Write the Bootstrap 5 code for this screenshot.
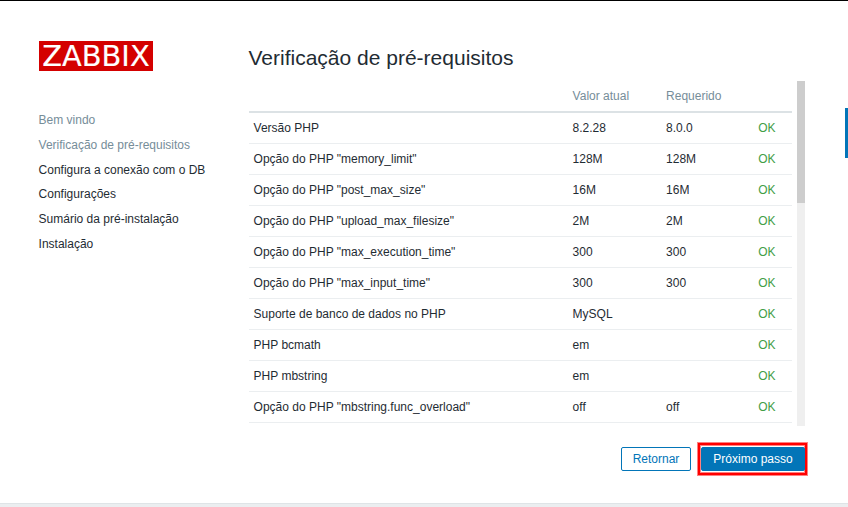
<!DOCTYPE html>
<html lang="pt-BR">
<head>
<meta charset="utf-8">
<meta name="viewport" content="width=device-width, initial-scale=1">
<title>Instalação</title>
<link href="https://cdn.jsdelivr.net/npm/bootstrap@5.3.0/dist/css/bootstrap.min.css" rel="stylesheet">
<style>
body{font:12px/18px "Liberation Sans",Arial,sans-serif;color:#1f2c33;background:#ebeef0;height:507px}
.setup{height:504px;border-top:1px solid #000;border-bottom:1px solid #dfe4e7}
.setup-left{width:249px;padding:40px 0 0 38.6px}
.logo{width:114px;height:30px;margin-left:.4px}
.steps{margin-top:37px}
.steps li{height:24.8px;line-height:24px;white-space:nowrap}
.muted{color:#768d99}
.setup-right{width:559px;padding-top:40px}
h1{font-size:21px;line-height:34px;height:40px;margin:0 0 0 -.5px}
.checks{height:345px;width:556px}
.reqs{width:543px;table-layout:fixed;margin:0;border-collapse:separate;border-spacing:0}
.reqs th{height:32px;padding:0 5px 0 4.6px;font-weight:400;color:#768d99;border-bottom:2px solid #dce2e5;vertical-align:middle}
.reqs td{height:31px;padding:0 5px 0 4.6px;border-bottom:1px solid #ebeef0;vertical-align:middle;line-height:18px}
.reqs .ok{color:#429e47;padding-right:16.4px;text-align:right}
.track{width:8px;background:#efefef}
.thumb{height:122px;background:#cdcdcd}
.actions{margin-top:16px;height:34px}
.actions .btn{height:24px;font-size:12px;line-height:22px;padding:0;border-radius:2px;border-color:#0275b8}
.btn-back{width:70px;color:#0275b8;background:#fff;margin:5px 6px 0 0}
.btn-next{width:104px;color:#fff;background:#0275b8}
.marked{width:111px;height:34px;padding:4px 2px 0 3px;border:1px solid #ff8080;box-shadow:inset 0 0 0 2px #f00,inset 0 0 0 3px #ff8080}
.side-strip{width:3px;height:503px;padding-top:107px;border-bottom:1px solid #dfe4e7}
.side-tab{height:50px;background:#0275b8}
</style>
<script src="https://cdn.jsdelivr.net/npm/bootstrap@5.3.0/dist/js/bootstrap.bundle.min.js"></script>
</head>
<body class="overflow-hidden">
<main class="setup d-flex bg-white">
  <aside class="setup-left flex-shrink-0">
    <svg class="logo d-block overflow-visible" viewBox="0 0 114 30" role="img" aria-label="ZABBIX">
      <rect width="114" height="30" fill="#d40000"/>
      <text x="3.2" y="25.4" font-family="DejaVu Sans, sans-serif" font-size="28" fill="#fff" stroke="#fff" stroke-width=".15" textLength="107.5" lengthAdjust="spacingAndGlyphs">ZABBIX</text>
    </svg>
    <ul class="steps list-unstyled mb-0">
      <li class="muted">Bem vindo</li>
      <li class="muted">Verificação de pré-requisitos</li>
      <li>Configura a conexão com o DB</li>
      <li>Configurações</li>
      <li>Sumário da pré-instalação</li>
      <li>Instalação</li>
    </ul>
  </aside>
  <section class="setup-right flex-shrink-0">
    <h1 class="fw-normal">Verificação de pré-requisitos</h1>
    <div class="checks d-flex justify-content-between">
      <div>
        <table class="reqs">
          <colgroup><col style="width:319px"><col style="width:93.5px"><col style="width:71.5px"><col style="width:59px"></colgroup>
          <thead><tr><th></th><th>Valor atual</th><th>Requerido</th><th></th></tr></thead>
          <tbody>
            <tr><td>Versão PHP</td><td>8.2.28</td><td>8.0.0</td><td class="ok">OK</td></tr>
            <tr><td>Opção do PHP "memory_limit"</td><td>128M</td><td>128M</td><td class="ok">OK</td></tr>
            <tr><td>Opção do PHP "post_max_size"</td><td>16M</td><td>16M</td><td class="ok">OK</td></tr>
            <tr><td>Opção do PHP "upload_max_filesize"</td><td>2M</td><td>2M</td><td class="ok">OK</td></tr>
            <tr><td>Opção do PHP "max_execution_time"</td><td>300</td><td>300</td><td class="ok">OK</td></tr>
            <tr><td>Opção do PHP "max_input_time"</td><td>300</td><td>300</td><td class="ok">OK</td></tr>
            <tr><td>Suporte de banco de dados no PHP</td><td>MySQL</td><td></td><td class="ok">OK</td></tr>
            <tr><td>PHP bcmath</td><td>em</td><td></td><td class="ok">OK</td></tr>
            <tr><td>PHP mbstring</td><td>em</td><td></td><td class="ok">OK</td></tr>
            <tr><td>Opção do PHP "mbstring.func_overload"</td><td>off</td><td>off</td><td class="ok">OK</td></tr>
          </tbody>
        </table>
      </div>
      <div class="track"><div class="thumb"></div></div>
    </div>
    <div class="actions d-flex justify-content-end align-items-start">
      <button type="button" class="btn btn-back">Retornar</button>
      <div class="marked d-flex align-items-start">
        <button type="button" class="btn btn-next">Próximo passo</button>
      </div>
    </div>
  </section>
  <div class="side-strip bg-white ms-auto"><div class="side-tab"></div></div>
</main>
</body>
</html>
